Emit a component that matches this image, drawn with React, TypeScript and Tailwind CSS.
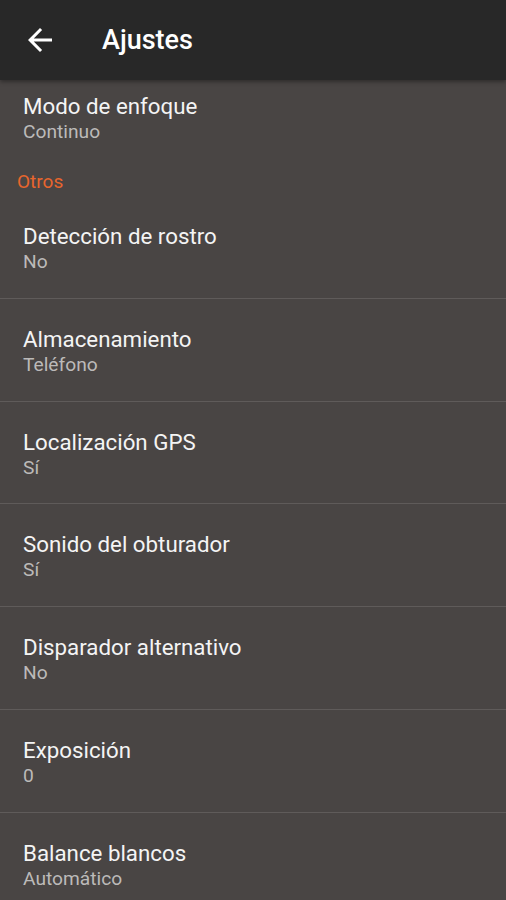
import React from "react";

const items = [
  { t: "Detección de rostro", s: "No" },
  { t: "Almacenamiento", s: "Teléfono" },
  { t: "Localización GPS", s: "Sí" },
  { t: "Sonido del obturador", s: "Sí" },
  { t: "Disparador alternativo", s: "No" },
  { t: "Exposición", s: "0" },
  { t: "Balance blancos", s: "Automático" },
];

export default function App() {
  return (
    <div
      className="w-[506px] h-[900px] overflow-hidden bg-[#494544] flex flex-col"
      style={{ fontFamily: "Roboto, 'Noto Sans', sans-serif" }}
    >
      <div className="relative z-10 h-[80px] shrink-0 bg-[#282828] flex items-center shadow-[0_2px_4px_rgba(0,0,0,0.35)]">
        <div className="w-[80px] flex items-center justify-center">
          <svg width="36" height="36" viewBox="0 0 24 24" fill="#ffffff">
            <path d="M20 11H7.83l5.59-5.59L12 4l-8 8 8 8 1.41-1.41L7.83 13H20v-2z" />
          </svg>
        </div>
        <div className="ml-[22px] text-[27px] font-medium text-white leading-none">Ajustes</div>
      </div>
      <div className="flex flex-col">
        <div className="h-[89px] pt-[13px] pl-[23px]">
          <div className="text-[22.3px] leading-[26px] text-[#f4f4f4]">Modo de enfoque</div>
          <div className="text-[19.2px] leading-[26px] text-[#bcbab9]">Continuo</div>
        </div>
        <div className="h-[27px] pl-[17px] flex items-center text-[19px] text-[#e8652d]">Otros</div>
        {items.map((it, i) => (
          <div
            key={i}
            className="h-[102.75px] shrink-0 border-b border-[#5f5b5a] pt-[27px] pl-[23px]"
          >
            <div className="text-[22.3px] leading-[26px] text-[#f4f4f4]">{it.t}</div>
            <div className="text-[19.2px] leading-[26px] text-[#bcbab9]">{it.s}</div>
          </div>
        ))}
      </div>
    </div>
  );
}
